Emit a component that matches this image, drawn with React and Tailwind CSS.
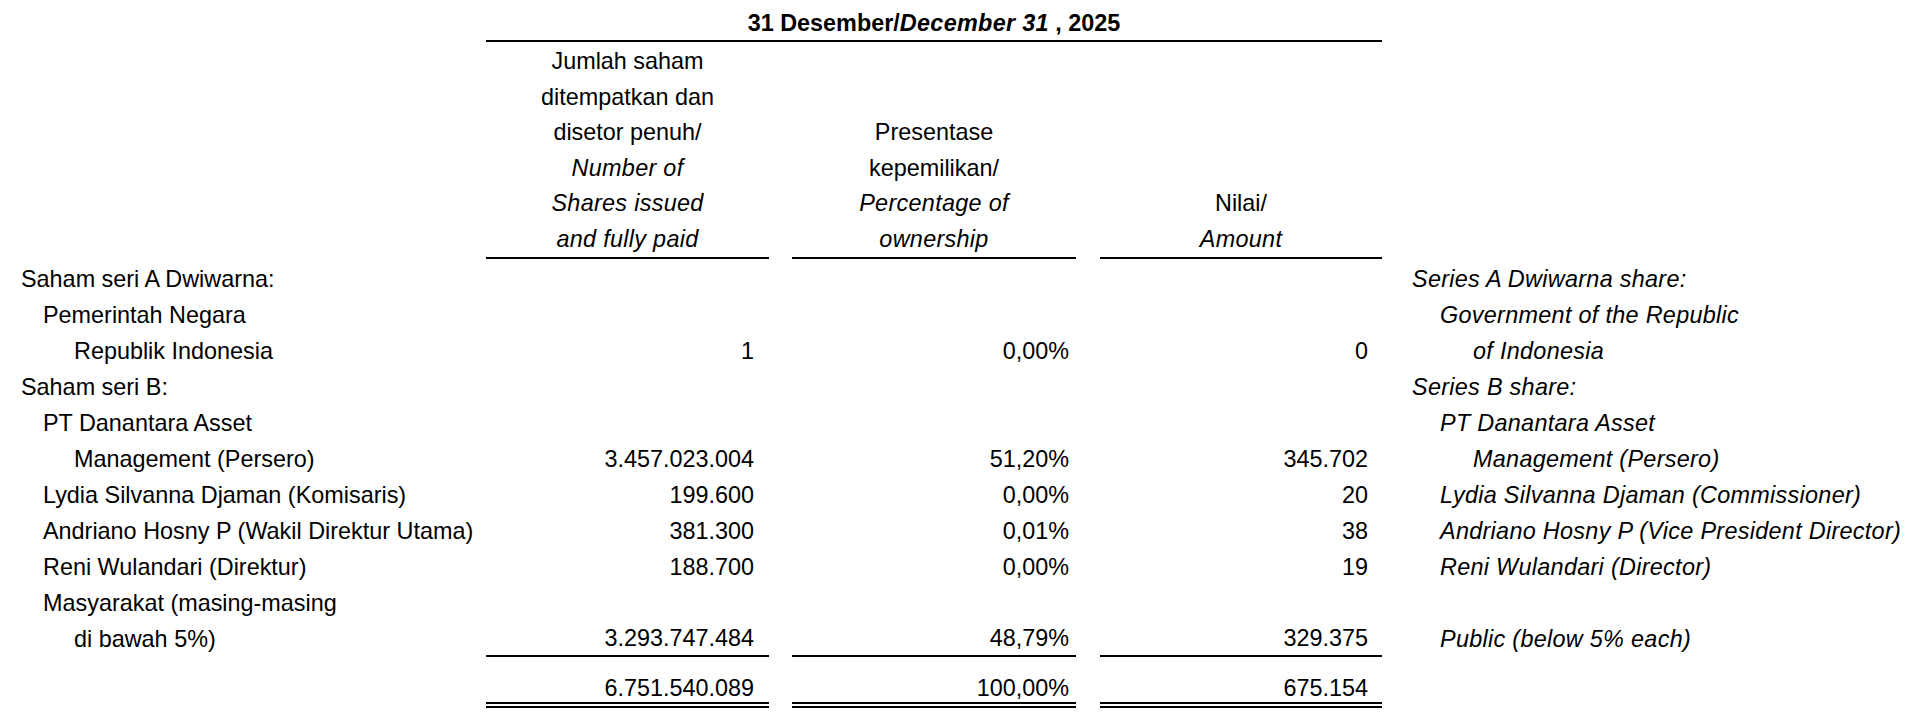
import React from 'react';

const GRID = 'grid grid-cols-[486px_283px_307px_306px_1fr]';

const leftIndent = ['pl-[21px]', 'pl-[43px]', 'pl-[74px]'];
const rightIndent = ['pl-[30px]', 'pl-[58px]', 'pl-[91px]'];

const rows = [
  { l: 'Saham seri A Dwiwarna:', li: 0, r: 'Series A Dwiwarna share:', ri: 0 },
  { l: 'Pemerintah Negara', li: 1, r: 'Government of the Republic', ri: 1 },
  { l: 'Republik Indonesia', li: 2, a: '1', b: '0,00%', c: '0', r: 'of Indonesia', ri: 2 },
  { l: 'Saham seri B:', li: 0, r: 'Series B share:', ri: 0 },
  { l: 'PT Danantara Asset', li: 1, r: 'PT Danantara Asset', ri: 1 },
  { l: 'Management (Persero)', li: 2, a: '3.457.023.004', b: '51,20%', c: '345.702', r: 'Management (Persero)', ri: 2 },
  { l: 'Lydia Silvanna Djaman (Komisaris)', li: 1, a: '199.600', b: '0,00%', c: '20', r: 'Lydia Silvanna Djaman (Commissioner)', ri: 1 },
  { l: 'Andriano Hosny P (Wakil Direktur Utama)', li: 1, a: '381.300', b: '0,01%', c: '38', r: 'Andriano Hosny P (Vice President Director)', ri: 1 },
  { l: 'Reni Wulandari (Direktur)', li: 1, a: '188.700', b: '0,00%', c: '19', r: 'Reni Wulandari (Director)', ri: 1 },
  { l: 'Masyarakat (masing-masing', li: 1 },
  { l: 'di bawah 5%)', li: 2, a: '3.293.747.484', b: '48,79%', c: '329.375', r: 'Public (below 5% each)', ri: 1, last: true },
];

function Row({ row }) {
  const line = row.last ? 'border-b-2 border-black leading-[34px]' : '';
  return (
    <div className={`${GRID} leading-[36px]`}>
      <div className={`${leftIndent[row.li]} whitespace-nowrap`}>{row.l}</div>
      <div className={`text-right pr-[15px] ${line}`}>{row.a}</div>
      <div className="pl-[23px]">
        <div className={`text-right pr-[7px] ${line}`}>{row.b}</div>
      </div>
      <div className="pl-[24px]">
        <div className={`text-right pr-[14px] ${line}`}>{row.c}</div>
      </div>
      <div className={`${rightIndent[row.ri ?? 0]} italic tracking-[0.3px] whitespace-nowrap`}>{row.r}</div>
    </div>
  );
}

export default function App() {
  return (
    <div className="bg-white text-black w-[1920px] h-[721px] overflow-hidden text-[23.4px] font-['Liberation_Sans',Arial,sans-serif]">
      {/* period title */}
      <div className={`${GRID} pt-[6px]`}>
        <div className="col-start-2 col-span-3 text-center font-bold leading-[34px] border-b-2 border-black whitespace-nowrap">
          31 Desember/<span className="italic tracking-[0.3px]">December 31</span> , 2025
        </div>
      </div>

      {/* column headers */}
      <div className={`${GRID} h-[217px] items-end leading-[35.5px]`}>
        <div />
        <div className="text-center border-b-2 border-black">
          <div>Jumlah saham</div>
          <div>ditempatkan dan</div>
          <div>disetor penuh/</div>
          <div className="italic tracking-[0.3px]">Number of</div>
          <div className="italic tracking-[0.3px]">Shares issued</div>
          <div className="italic tracking-[0.3px]">and fully paid</div>
        </div>
        <div className="pl-[23px]">
          <div className="text-center border-b-2 border-black">
            <div>Presentase</div>
            <div>kepemilikan/</div>
            <div className="italic tracking-[0.3px]">Percentage of</div>
            <div className="italic tracking-[0.3px]">ownership</div>
          </div>
        </div>
        <div className="pl-[24px]">
          <div className="text-center border-b-2 border-black">
            <div>Nilai/</div>
            <div className="italic tracking-[0.3px]">Amount</div>
          </div>
        </div>
        <div />
      </div>

      <div className="pt-[2px]">
        {rows.map((row, i) => (
          <Row key={i} row={row} />
        ))}
      </div>

      {/* totals */}
      <div className={`${GRID} leading-[28px] pt-[17px]`}>
        <div />
        <div className="text-right pr-[15px] border-b-[6px] border-double border-black">6.751.540.089</div>
        <div className="pl-[23px]">
          <div className="text-right pr-[7px] border-b-[6px] border-double border-black">100,00%</div>
        </div>
        <div className="pl-[24px]">
          <div className="text-right pr-[14px] border-b-[6px] border-double border-black">675.154</div>
        </div>
        <div />
      </div>
    </div>
  );
}
